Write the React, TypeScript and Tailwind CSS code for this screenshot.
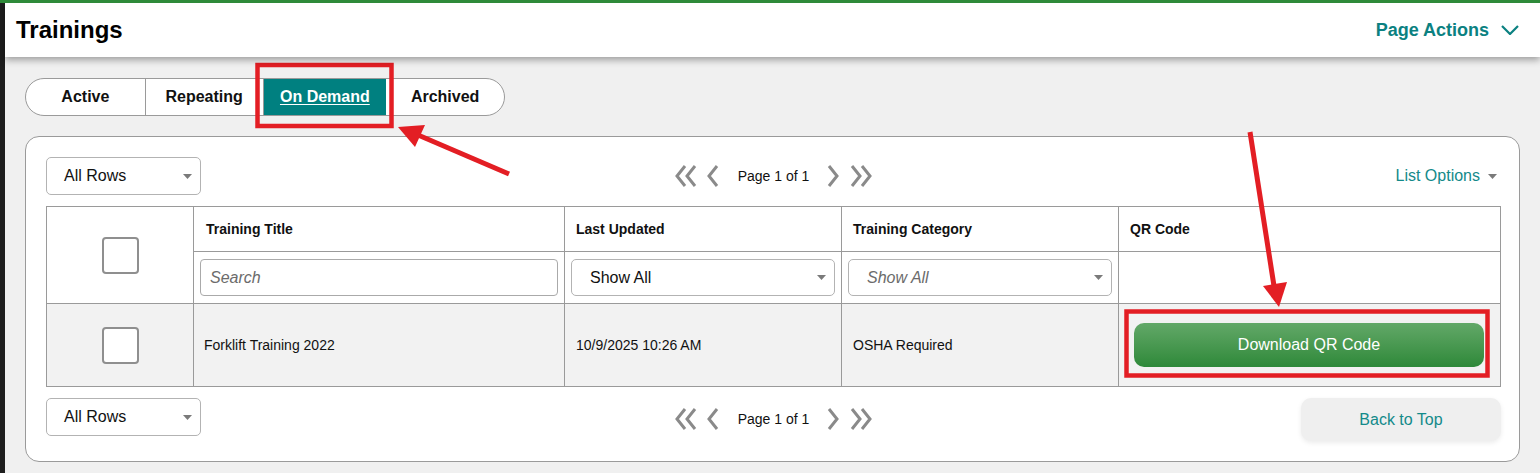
import React from "react";

const font = { fontFamily: '"Liberation Sans", Arial, sans-serif' };

function Caret() {
  return (
    <svg width="9" height="5" viewBox="0 0 9 5" className="shrink-0">
      <path d="M0 0 L9 0 L4.5 5 Z" fill="#7a7a7a" />
    </svg>
  );
}

function SelectBox({ label, italic, className }: { label: string; italic?: boolean; className: string }) {
  return (
    <div
      className={`flex items-center justify-between rounded-[5px] border border-[#b3b3b3] bg-white pr-[8px] text-[16px] ${className}`}
    >
      <span className={italic ? "italic text-[#6b6b6b]" : "text-[#111]"}>{label}</span>
      <Caret />
    </div>
  );
}

function Checkbox() {
  return <div className="h-[37px] w-[37px] rounded-[4px] border-2 border-[#8f8f8f] bg-white" />;
}

function Chevron({ dir, double }: { dir: "left" | "right"; double?: boolean }) {
  const single = dir === "left" ? "M10 2 L2 12 L10 22" : "M2 2 L10 12 L2 22";
  const w = double ? 22 : 12;
  return (
    <svg width={w} height="24" viewBox={`0 0 ${w} 24`} fill="none" stroke="#8a8a8a" strokeWidth="3" strokeLinecap="butt">
      <path d={single} />
      {double && <path d={dir === "left" ? "M20 2 L12 12 L20 22" : "M12 2 L20 12 L12 22"} />}
    </svg>
  );
}

function Pager() {
  return (
    <div className="flex items-center">
      <Chevron dir="left" double />
      <span className="ml-[10px]">
        <Chevron dir="left" />
      </span>
      <span className="ml-[19px] text-[14px] text-[#111]">Page 1 of 1</span>
      <span className="ml-[18px]">
        <Chevron dir="right" />
      </span>
      <span className="ml-[11px]">
        <Chevron dir="right" double />
      </span>
    </div>
  );
}

const tabs = ["Active", "Repeating", "On Demand", "Archived"];
const tabWidths = ["w-[120px]", "w-[118px]", "w-[123px]", "w-[118px]"];

export default function App() {
  return (
    <div style={font} className="relative h-[473px] w-[1540px] overflow-hidden border-t-[3px] border-[#2f8a3a] bg-[#f0f0f0]">
      <div className="flex h-full">
        <div className="w-[5px] shrink-0 bg-[#1e1e1e]" />
        <div className="flex min-w-0 flex-1 flex-col">
          {/* page header */}
          <header className="relative z-10 flex h-[54px] items-center justify-between bg-white pl-[11px] pr-[21px] shadow-[0_3px_7px_rgba(0,0,0,0.35)]">
            <h1 className="text-[24px] font-bold text-black">Trainings</h1>
            <button className="flex items-center gap-[12px] text-[18px] font-bold text-[#0b8181]">
              Page Actions
              <svg width="18" height="10" viewBox="0 0 18 10" fill="none" stroke="#0b8181" strokeWidth="2.2">
                <path d="M1 1 L9 9 L17 1" />
              </svg>
            </button>
          </header>

          <main className="flex flex-col pl-[20px] pr-[20px] pt-[21px]">
            {/* tab switcher */}
            <div className="flex h-[38px] w-[480px] items-stretch overflow-hidden rounded-full border border-[#9a9a9a] bg-white">
              {tabs.map((t, i) => {
                const active = t === "On Demand";
                return (
                  <div
                    key={t}
                    className={`flex items-center justify-center text-[16px] font-bold ${tabWidths[i]} ${
                      i < 2 ? "border-r border-[#9a9a9a]" : ""
                    } ${active ? "bg-[#008080] text-white underline underline-offset-2" : "text-[#111]"}`}
                  >
                    {t}
                  </div>
                );
              })}
            </div>

            {/* list card */}
            <section className="mt-[20px] flex h-[326px] flex-col rounded-[14px] border border-[#9a9a9a] bg-white pl-[20px] pr-[18px] pt-[20px]">
              <div className="grid grid-cols-[1fr_auto_1fr] items-center">
                <SelectBox label="All Rows" className="h-[38px] w-[155px] pl-[17px]" />
                <Pager />
                <div className="flex items-center justify-end gap-[8px] pr-[4px] text-[16px] text-[#138a8a]">
                  List Options
                  <Caret />
                </div>
              </div>

              <table className="mt-[11px] w-full table-fixed border-collapse text-[14px] text-[#111]">
                <colgroup>
                  <col className="w-[147px]" />
                  <col className="w-[371px]" />
                  <col className="w-[277px]" />
                  <col className="w-[277px]" />
                  <col />
                </colgroup>
                <thead>
                  <tr className="h-[45px]">
                    <th rowSpan={2} className="border border-[#9a9a9a] align-middle">
                      <div className="flex justify-center">
                        <Checkbox />
                      </div>
                    </th>
                    <th className="border border-[#9a9a9a] pl-[12px] text-left text-[14px] font-bold">Training Title</th>
                    <th className="border border-[#9a9a9a] pl-[11px] text-left text-[14px] font-bold">Last Updated</th>
                    <th className="border border-[#9a9a9a] pl-[11px] text-left text-[14px] font-bold">Training Category</th>
                    <th className="border border-[#9a9a9a] pl-[11px] text-left text-[14px] font-bold">QR Code</th>
                  </tr>
                  <tr className="h-[52px]">
                    <td className="border border-[#9a9a9a] px-[6px]">
                      <div className="flex h-[37px] items-center rounded-[4px] border border-[#aaa] pl-[9px] text-[16px] italic text-[#6b6b6b]">
                        Search
                      </div>
                    </td>
                    <td className="border border-[#9a9a9a] px-[6px]">
                      <SelectBox label="Show All" className="h-[37px] w-full pl-[18px]" />
                    </td>
                    <td className="border border-[#9a9a9a] px-[6px]">
                      <SelectBox label="Show All" italic className="h-[37px] w-full pl-[18px]" />
                    </td>
                    <td className="border border-[#9a9a9a]" />
                  </tr>
                </thead>
                <tbody>
                  <tr className="h-[83px] bg-[#f2f2f2]">
                    <td className="border border-[#9a9a9a]">
                      <div className="flex justify-center">
                        <Checkbox />
                      </div>
                    </td>
                    <td className="border border-[#9a9a9a] pl-[10px]">Forklift Training 2022</td>
                    <td className="border border-[#9a9a9a] pl-[11px]">10/9/2025 10:26 AM</td>
                    <td className="border border-[#9a9a9a] pl-[11px]">OSHA Required</td>
                    <td className="border border-[#9a9a9a] pl-[15px] pr-[16px]">
                      <button className="flex h-[44px] w-full items-center justify-center rounded-[10px] bg-gradient-to-b from-[#62a868] to-[#2d8939] text-[16px] text-white">
                        Download QR Code
                      </button>
                    </td>
                  </tr>
                </tbody>
              </table>

              <div className="mt-[11px] grid grid-cols-[1fr_auto_1fr] items-start">
                <SelectBox label="All Rows" className="h-[38px] w-[155px] pl-[17px]" />
                <div className="mt-[9px]">
                  <Pager />
                </div>
                <div className="flex justify-end">
                  <button className="flex h-[43px] w-[200px] items-center justify-center rounded-[10px] bg-[#efefef] text-[16px] text-[#138a8a] shadow-[0_2px_5px_rgba(0,0,0,0.08)]">
                    Back to Top
                  </button>
                </div>
              </div>
            </section>
          </main>
        </div>
      </div>

      {/* red call-out marks drawn over the page */}
      <svg className="pointer-events-none absolute left-0 top-[-3px]" width="1540" height="473" viewBox="0 0 1540 473">
        <rect x="257.5" y="65" width="134" height="61" fill="none" stroke="#e31e24" strokeWidth="4.5" />
        <rect x="1126.5" y="311.5" width="361" height="64" fill="none" stroke="#e31e24" strokeWidth="4.5" />
        <line x1="509" y1="174" x2="418" y2="135" stroke="#e31e24" strokeWidth="5" />
        <polygon points="398,127 425,125 415,147" fill="#e31e24" />
        <line x1="1250" y1="132" x2="1274" y2="286" stroke="#e31e24" strokeWidth="5" />
        <polygon points="1279,307 1263,286 1287,282" fill="#e31e24" />
      </svg>
    </div>
  );
}
